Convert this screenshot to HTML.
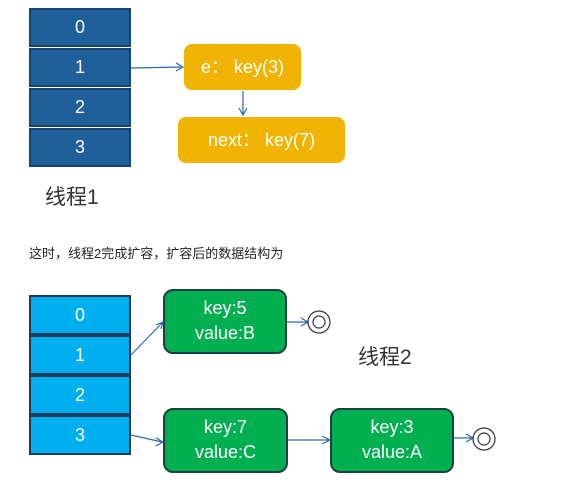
<!DOCTYPE html>
<html><head><meta charset="utf-8"><style>
body{margin:0;width:570px;height:483px;background:#fff;position:relative;overflow:hidden;font-family:"Liberation Sans","Noto Sans CJK SC",sans-serif}
.c{position:absolute;box-sizing:border-box;color:#fff;text-align:center;font-size:18px}
.d{background:#1f5f9a;border:2px solid #15446f;left:29px;width:102px;height:39px;line-height:35px}
.l{background:#00aff0;border:2px solid #1f3a5c;left:29px;width:102px;height:40px;line-height:36px}
.y{background:#f0b400;border-radius:8px;line-height:46px}
.g{background:#00b050;border:2px solid #1f3f46;border-radius:10px;line-height:25px;padding-top:5px}
.t{position:absolute;color:#333;font-size:21px}
</style></head><body>
<div class="c d" style="top:8px">0</div>
<div class="c d" style="top:48px">1</div>
<div class="c d" style="top:88px">2</div>
<div class="c d" style="top:128px">3</div>
<div class="c y" style="left:184px;top:44px;width:117px;height:46px">e： key(3)</div>
<div class="c y" style="left:178px;top:117px;width:167px;height:46px">next： key(7)</div>
<div class="t" style="left:45px;top:181px">线程1</div>
<div class="t" style="left:29px;top:243px;font-size:13px;color:#222">这时，线程2完成扩容，扩容后的数据结构为</div>
<div class="c l" style="top:295px">0</div>
<div class="c l" style="top:335px">1</div>
<div class="c l" style="top:375px">2</div>
<div class="c l" style="top:415px">3</div>
<div class="c g" style="left:163px;top:289px;width:124px;height:65px">key:5<br>value:B</div>
<div class="c g" style="left:163px;top:408px;width:125px;height:65px">key:7<br>value:C</div>
<div class="c g" style="left:330px;top:408px;width:124px;height:65px">key:3<br>value:A</div>
<div class="t" style="left:358px;top:341px">线程2</div>
<svg width="570" height="483" style="position:absolute;left:0;top:0" fill="none" stroke="#2e6aa6" stroke-width="1.2">
<path d="M131 68L181 67M176 63L183 67L176 71"/>
<path d="M243 91V114M239 108L243 115L247 108"/>
<path d="M131 355L162 323M156 325L163 322L161 329"/>
<path d="M131 435L162 442M156 438L163 442L156 446"/>
<path d="M288 440L329 440M322 436L330 440L322 444"/>
<path d="M287 322L307 322M301 318L308 322L301 326"/>
<path d="M454 438L472 438M466 434L473 438L466 442"/>
<g stroke="#333"><circle cx="319" cy="322" r="11"/><circle cx="319" cy="322" r="6"/><circle cx="484" cy="439" r="11"/><circle cx="484" cy="439" r="6"/></g>
</svg>
</body></html>
